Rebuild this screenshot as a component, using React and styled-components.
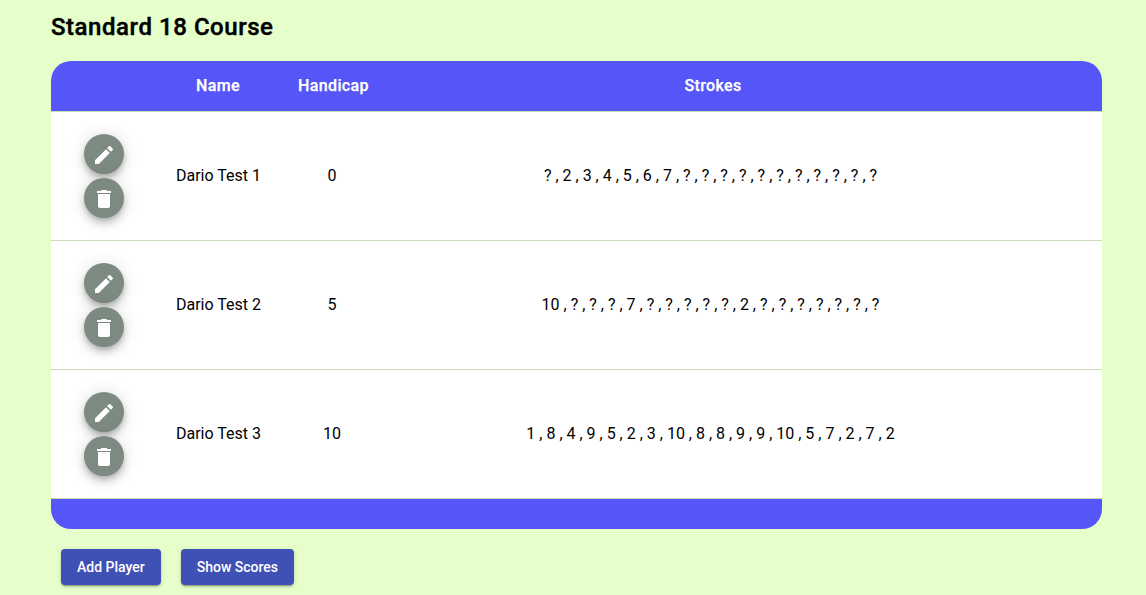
import React from "react";
import styled, { createGlobalStyle } from "styled-components";

const GlobalStyle = createGlobalStyle`
  * { box-sizing: border-box; }
  html { height: 100%; overflow: hidden; }
  body {
    margin: 0;
    min-height: 100%;
    background: #e6ffca;
    color: #000;
    font-family: Roboto, "Liberation Sans", sans-serif;
  }
`;

const Page = styled.main`
  padding: 11px 44px 10px 51px;
`;

const Title = styled.h2`
  margin: 0 0 18px;
  font-size: 24px;
  line-height: 32px;
  font-weight: 500;
  letter-spacing: 0.55px;
  -webkit-text-stroke: 0.45px #000;
`;

const Card = styled.section`
  border-radius: 20px;
  overflow: hidden;
  background: #fff;
`;

const Row = styled.div`
  display: grid;
  grid-template-columns: 106px 123px 104px 653px 65px;
  align-items: center;
  text-align: center;
  height: 129px;
  border-bottom: 1px solid #c8ddb2;
  font-size: 16px;
  line-height: 24px;
`;

const Header = styled(Row)`
  grid-template-columns: 106px 122px 109px 650px 64px;
  height: 51px;
  background: #5555f8;
  color: #fff;
  font-weight: 500;
  letter-spacing: 0.37px;
  -webkit-text-stroke: 0.25px #fff;
`;

const Footer = styled.div`
  height: 30px;
  background: #5555f8;
`;

const Cell = styled.div`
  white-space: nowrap;
`;

const Actions = styled.div`
  display: flex;
  flex-direction: column;
  align-items: center;
  gap: 4px;
`;

const RoundButton = styled.button`
  display: flex;
  align-items: center;
  justify-content: center;
  width: 40px;
  height: 40px;
  padding: 0;
  border: 0;
  border-radius: 50%;
  background: #7d8a82;
  box-shadow: 0 3px 5px -1px rgba(0, 0, 0, 0.2), 0 6px 10px 0 rgba(0, 0, 0, 0.14),
    0 1px 18px 0 rgba(0, 0, 0, 0.12);
`;

const Icon = styled.svg`
  width: 24px;
  height: 24px;
  margin-top: 2px;
  fill: #fff;
`;

const ButtonBar = styled.div`
  display: flex;
  gap: 20px;
  padding: 20px 10px 0;
`;

const Button = styled.button`
  height: 36px;
  padding: 0 16px;
  border: 0;
  border-radius: 4px;
  background: #3f51b5;
  color: #fff;
  font: 500 14px/36px Roboto, "Liberation Sans", sans-serif;
  box-shadow: 0 3px 1px -2px rgba(0, 0, 0, 0.2), 0 2px 2px 0 rgba(0, 0, 0, 0.14),
    0 1px 5px 0 rgba(0, 0, 0, 0.12);
`;

const players = [
  { name: "Dario Test 1", handicap: 0, strokes: "? 2 3 4 5 6 7 ? ? ? ? ? ? ? ? ? ? ?" },
  { name: "Dario Test 2", handicap: 5, strokes: "10 ? ? ? 7 ? ? ? ? ? 2 ? ? ? ? ? ? ?" },
  { name: "Dario Test 3", handicap: 10, strokes: "1 8 4 9 5 2 3 10 8 8 9 9 10 5 7 2 7 2" },
];

export default function App() {
  return (
    <>
      <GlobalStyle />
      <Page>
        <Title>Standard 18 Course</Title>
        <Card>
          <Header>
            <Cell />
            <Cell>Name</Cell>
            <Cell>Handicap</Cell>
            <Cell>Strokes</Cell>
          </Header>
          {players.map((p) => (
            <Row key={p.name}>
              <Actions>
                <RoundButton aria-label="Edit">
                  <Icon viewBox="0 0 24 24">
                    <path d="M3 17.25V21h3.75L17.81 9.94l-3.75-3.75L3 17.25zM20.71 7.04a.996.996 0 0 0 0-1.41l-2.34-2.34a.996.996 0 0 0-1.41 0l-1.83 1.83 3.75 3.75 1.83-1.83z" />
                  </Icon>
                </RoundButton>
                <RoundButton aria-label="Delete">
                  <Icon viewBox="0 0 24 24">
                    <path d="M6 19c0 1.1.9 2 2 2h8c1.1 0 2-.9 2-2V7H6v12zM19 4h-3.5l-1-1h-5l-1 1H5v2h14V4z" />
                  </Icon>
                </RoundButton>
              </Actions>
              <Cell>{p.name}</Cell>
              <Cell>{p.handicap}</Cell>
              <Cell>{p.strokes.split(" ").join(" , ")}</Cell>
            </Row>
          ))}
          <Footer />
        </Card>
        <ButtonBar>
          <Button>Add Player</Button>
          <Button>Show Scores</Button>
        </ButtonBar>
      </Page>
    </>
  );
}
